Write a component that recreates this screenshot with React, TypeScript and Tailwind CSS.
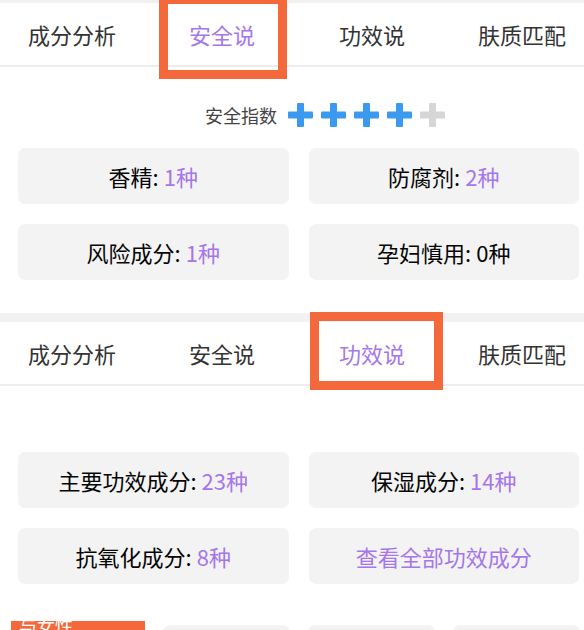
import type { ReactNode } from 'react';

const tabs = ['成分分析', '安全说', '功效说', '肤质匹配'];

type Stat = { label: string; value?: string; link?: boolean };

const safetyStats: Stat[] = [
  { label: '香精', value: '1种' },
  { label: '防腐剂', value: '2种' },
  { label: '风险成分', value: '1种' },
  { label: '孕妇慎用', value: '0种' },
];

const effectStats: Stat[] = [
  { label: '主要功效成分', value: '23种' },
  { label: '保湿成分', value: '14种' },
  { label: '抗氧化成分', value: '8种' },
  { label: '查看全部功效成分', link: true },
];

function TabBar({ active }: { active: number }) {
  return (
    <div className="h-[64px] bg-white border-b-2 border-[#ededed] overflow-hidden">
      <div className="flex h-full -ml-[3px]">
        {tabs.map((t, i) => (
          <div
            key={t}
            className={`w-[150px] shrink-0 flex items-center justify-center text-[22px] leading-none ${
              i === active ? 'text-[#a676ec]' : 'text-[#333333]'
            }`}
          >
            {t}
          </div>
        ))}
      </div>
    </div>
  );
}

function StatCard({ stat }: { stat: Stat }) {
  return (
    <div className="h-[56px] rounded-[7px] bg-[#f3f3f3] flex items-center justify-center text-[22px] leading-none">
      {stat.link ? (
        <span className="text-[#a676ec]">{stat.label}</span>
      ) : (
        <span className="text-[#050505]">
          {stat.label}:{' '}
          <span className={stat.value === '0种' ? 'text-[#050505]' : 'text-[#a676ec]'}>{stat.value}</span>
        </span>
      )}
    </div>
  );
}

function StatGrid({ items }: { items: Stat[] }) {
  return (
    <div className="grid grid-cols-2 gap-x-[20px] gap-y-[20px] pl-[18px] pr-[5px]">
      {items.map((s) => (
        <StatCard key={s.label} stat={s} />
      ))}
    </div>
  );
}

function Plus({ on }: { on: boolean }) {
  return (
    <svg width="25" height="24" viewBox="0 0 25 24">
      <rect x="0" y="8.5" width="25" height="7" rx="1" fill={on ? '#3b9af0' : '#d6d6d6'} />
      <rect x="9" y="0" width="7" height="24" rx="1" fill={on ? '#3b9af0' : '#d6d6d6'} />
    </svg>
  );
}

// annotation frame drawn over the active tab
function Marker({ className }: { className: string }) {
  return <div className={`absolute border-[9px] border-[#f4693b] pointer-events-none ${className}`} />;
}

function Section({ children }: { children: ReactNode }) {
  return <div className="bg-white">{children}</div>;
}

export default function App() {
  return (
    <div
      className="relative w-[584px] h-[630px] overflow-hidden bg-white"
      style={{ fontFamily: '"Noto Sans CJK SC", "Noto Sans", sans-serif' }}
    >
      <div className="h-[3px] bg-[#f0f0f0]" />
      <Section>
        <TabBar active={1} />
        <div className="h-[246px] pt-[36px]">
          <div className="flex items-center gap-[8px] pl-[205px] h-[24px]">
            <span className="text-[18px] leading-none text-[#444444] mr-[3px]">安全指数</span>
            {[0, 1, 2, 3, 4].map((i) => (
              <Plus key={i} on={i < 4} />
            ))}
          </div>
          <div className="pt-[21px]">
            <StatGrid items={safetyStats} />
          </div>
        </div>
      </Section>

      <div className="h-[9px] bg-[#f2f2f2]" />

      <Section>
        <TabBar active={2} />
        <div className="pt-[66px]">
          <StatGrid items={effectStats} />
        </div>
        <div className="flex gap-[18px] pt-[37px] pl-[11px]">
          <div className="w-[134px] h-[20px] bg-[#f4693b] pl-[8px]">
            <div className="text-white text-[18px] leading-none -mt-[5px]">与女性</div>
          </div>
          <div className="w-[127px] h-[20px] rounded-t-[7px] bg-[#f3f3f3] mt-[4px]" />
          <div className="w-[127px] h-[20px] rounded-t-[7px] bg-[#f3f3f3] mt-[4px]" />
          <div className="w-[127px] h-[20px] rounded-t-[7px] bg-[#f3f3f3] mt-[4px]" />
        </div>
      </Section>

      <Marker className="left-[159px] top-[-5px] w-[128px] h-[84px]" />
      <Marker className="left-[310px] top-[312px] w-[133px] h-[78px]" />
    </div>
  );
}
